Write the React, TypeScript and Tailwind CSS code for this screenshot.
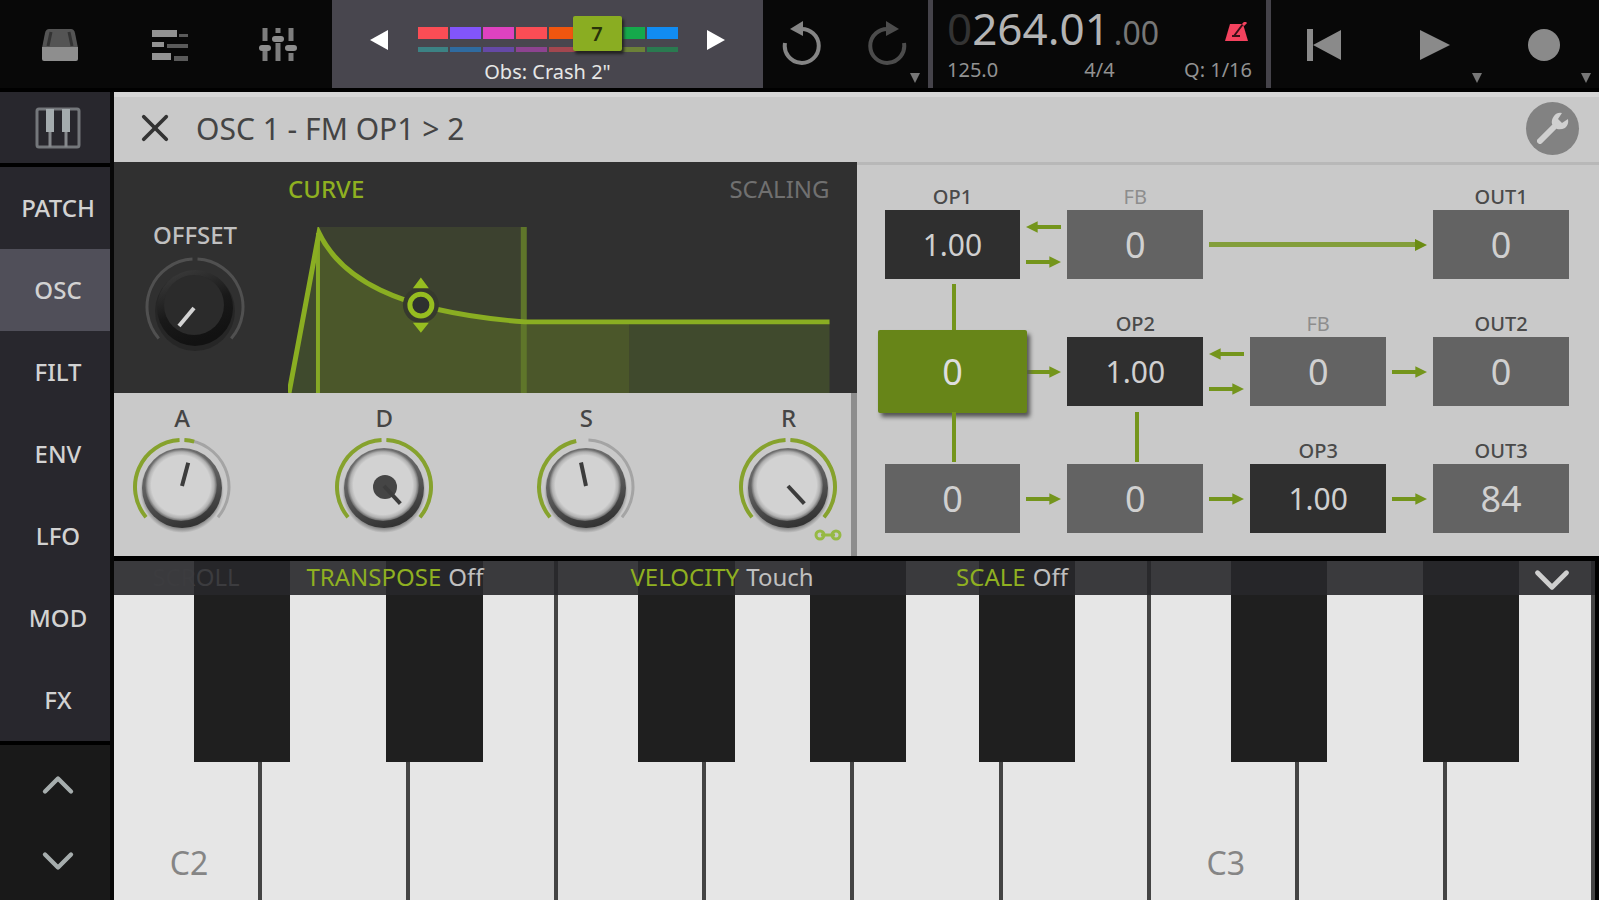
import { ChevronDown, ChevronUp, X } from "lucide-react";

const tabs = ["PATCH", "OSC", "FILT", "ENV", "LFO", "MOD", "FX"];

const clips = [
  { top: "bg-[#fb4d55]", bottom: "bg-[#3c8284]" },
  { top: "bg-[#8255fb]", bottom: "bg-[#2f6ba0]" },
  { top: "bg-[#df42c0]", bottom: "bg-[#6549a6]" },
  { top: "bg-[#fb4d55]", bottom: "bg-[#8d4390]" },
  { top: "bg-[#f0560f]", bottom: "bg-[#a3474f]" },
  { top: "bg-[#8aad22]", bottom: "bg-[#8d4428]" },
  { top: "bg-[#15a94b]", bottom: "bg-[#6c8138]" },
  { top: "bg-[#118cf2]", bottom: "bg-[#2a7a50]" },
];

const knobs = [
  { name: "A", angle: 15 },
  { name: "D", angle: 137, dot: true },
  { name: "S", angle: -12 },
  { name: "R", angle: 137, linked: true },
];

const keys = [
  { note: "C2", label: true, sharp: "left-[54%]" },
  { note: "D2", sharp: "left-[84%]" },
  { note: "E2" },
  { note: "F2", sharp: "left-[54%]" },
  { note: "G2", sharp: "left-[70%]" },
  { note: "A2", sharp: "left-[84%]" },
  { note: "B2" },
  { note: "C3", label: true, sharp: "left-[54%]" },
  { note: "D3", sharp: "left-[84%]" },
  { note: "E3" },
];

const settings = [
  { name: "TRANSPOSE", value: "Off" },
  { name: "VELOCITY", value: "Touch" },
  { name: "SCALE", value: "Off" },
];

function arc(from: number, to: number, r: number) {
  const point = (deg: number) => {
    const a = ((deg - 90) * Math.PI) / 180;
    return `${50 + r * Math.cos(a)} ${50 + r * Math.sin(a)}`;
  };
  return `M${point(from)}A${r} ${r} 0 0 1 ${point(to)}`;
}

function Caret() {
  return (
    <svg className="absolute right-2 bottom-[5px] h-[10px] w-[10px]" viewBox="0 0 12 12">
      <path d="M0 0h12L6 12z" fill="#777" />
    </svg>
  );
}

function TopBar() {
  return (
    <header className="grid h-[92px] shrink-0 grid-cols-[332fr_431fr_165fr_343fr_328fr] border-b-4 border-black bg-[#080808]">
      <div className="grid grid-cols-3 pt-[2px] pl-[6px]">
        <button aria-label="Devices" className="flex items-center justify-center">
          <svg className="h-9 w-10" viewBox="0 0 40 36">
            <path d="M9 2h22q3 0 4 4l3 15H2L5 6q1-4 4-4z" fill="#545454" />
            <path d="M11 5L8 19M29 5l3 14" stroke="#333" strokeWidth="3" />
            <path d="M2 20h36v12q0 2-2 2H4q-2 0-2-2z" fill="#8e8e8e" />
          </svg>
        </button>
        <button aria-label="Song" className="flex items-center justify-center">
          <svg className="h-9 w-10" viewBox="0 0 40 36">
            <path d="M3 3h25v7H3zM3 15h12v5H3zM3 26h19v7H3z" fill="#929292" />
            <path d="M30 7h9v3h-9zM18 17h21v4H18zM25 29h14v5H25z" fill="#5a5a5a" />
          </svg>
        </button>
        <button aria-label="Mixer" className="flex items-center justify-center">
          <svg className="h-9 w-10" viewBox="0 0 40 36" stroke="#7d7d7d" fill="none">
            <path d="M7 1v13M7 18v16M20 1v5M20 16v18M33 1v13M33 26v8" strokeWidth="5" />
            <path d="M4 21h6M17 12h6M30 21h6" stroke="#8e8e8e" strokeWidth="6" strokeLinecap="round" />
          </svg>
        </button>
      </div>

      <div className="flex justify-between bg-[#48464e] px-[38px]">
        <button aria-label="Previous track" className="pb-2">
          <svg className="h-5 w-[18px]" viewBox="0 0 18 20">
            <path d="M18 0v20L0 10z" fill="#fff" />
          </svg>
        </button>
        <div className="flex flex-col items-center pt-[27px]">
          <div className="relative grid w-[260px] grid-cols-8 gap-x-[2px] gap-y-2">
            {clips.map((c, i) => (
              <span key={i} className={`h-3 ${c.top}`} />
            ))}
            {clips.map((c, i) => (
              <span key={i} className={`h-[5px] ${c.bottom}`} />
            ))}
            <span className="absolute -top-[11px] left-[155px] flex h-[35px] w-[49px] items-center justify-center rounded-xs bg-[#8aad22] text-xl font-semibold text-[#28330a] shadow-[2px_3px_3px_#222]">
              7
            </span>
          </div>
          <span className="mt-1 text-xl leading-8 text-[#e6e6e6]">Obs: Crash 2"</span>
        </div>
        <button aria-label="Next track" className="pb-2">
          <svg className="h-5 w-[18px]" viewBox="0 0 18 20">
            <path d="M0 0v20l18-10z" fill="#fff" />
          </svg>
        </button>
      </div>

      <div className="grid grid-cols-2">
        <button aria-label="Undo" className="flex items-center justify-center pr-1 pb-1">
          <svg className="h-[46px] w-10" viewBox="0 0 40 46" fill="none">
            <path d="M3 24A17 17 0 1 0 18 10" stroke="#858585" strokeWidth="4" />
            <path d="M8 10L21 2v15z" fill="#858585" />
          </svg>
        </button>
        <button aria-label="Redo" className="relative flex items-center justify-center pb-1">
          <svg className="h-[46px] w-10" viewBox="0 0 40 46" fill="none">
            <path d="M37 24A17 17 0 1 1 22 10" stroke="#4c4c4c" strokeWidth="4" />
            <path d="M32 10L19 2v15z" fill="#4c4c4c" />
          </svg>
          <Caret />
        </button>
      </div>

      <div className="flex flex-col border-x-[5px] border-[#45434a] px-[14px] text-[#929292]">
        <div className="flex h-14 items-baseline">
          <span className="text-[44px] leading-[56px] text-[#333]">0</span>
          <span className="text-[44px] leading-[56px] text-[#b4b4b4]">264.01</span>
          <span className="ml-1 text-[32px] text-[#777]">.00</span>
          <button aria-label="Metronome" className="mt-[22px] mr-1 ml-auto self-start">
            <svg className="h-[19px] w-[23px]" viewBox="0 0 23 19">
              <path d="M5 2h13l5 17H0z" fill="#f4425e" />
              <path d="M9 14L18 2M7 14h8" stroke="#3a0f18" strokeWidth="2" />
              <path d="M18 3l3-3" stroke="#f4425e" strokeWidth="3" />
            </svg>
          </button>
        </div>
        <div className="grid grid-cols-3 text-xl leading-7">
          <span>125.0</span>
          <span className="text-center">4/4</span>
          <span className="text-right">Q: 1/16</span>
        </div>
      </div>

      <div className="grid grid-cols-3">
        <button aria-label="Rewind" className="flex items-center justify-center pt-[2px] pr-1">
          <svg className="h-8 w-[34px]" viewBox="0 0 34 32" fill="#8a8a8a">
            <path d="M0 0h6v32H0zM34 1v30L6 16z" />
          </svg>
        </button>
        <button aria-label="Play" className="relative flex items-center justify-center pt-[2px]">
          <svg className="h-8 w-8" viewBox="0 0 32 32">
            <path d="M1 1v30l30-15z" fill="#8a8a8a" />
          </svg>
          <Caret />
        </button>
        <button aria-label="Record" className="relative flex items-center justify-center pt-[2px]">
          <span className="h-8 w-8 rounded-full bg-[#8a8a8a]" />
          <Caret />
        </button>
      </div>
    </header>
  );
}

function Sidebar() {
  return (
    <nav className="flex w-[114px] shrink-0 flex-col border-r-4 border-[#080808] bg-[#28272d]">
      <button
        aria-label="Keyboard"
        className="flex h-[75px] items-center justify-center border-b-4 border-black pl-[6px]"
      >
        <svg className="h-[42px] w-[46px]" viewBox="0 0 46 42" fill="none">
          <rect x="2" y="2" width="42" height="38" rx="2" stroke="#74777b" strokeWidth="3" />
          <path d="M15 24v16M31 24v16" stroke="#85888c" strokeWidth="3" />
          <path d="M15 2v23M31 2v23" stroke="#a4abae" strokeWidth="8" />
        </svg>
      </button>
      {tabs.map((t) => (
        <button
          key={t}
          className={`h-[82px] pl-[6px] text-2xl font-medium text-[#d2d2d2] ${t === "OSC" ? "bg-[#504f59]" : ""}`}
        >
          {t}
        </button>
      ))}
      <div className="flex flex-1 flex-col items-center justify-center gap-6 border-t-4 border-black bg-[#191919] pl-[6px] text-[#a6adad]">
        <button aria-label="Octave up">
          <ChevronUp className="h-[52px] w-[58px]" strokeWidth={2} />
        </button>
        <button aria-label="Octave down">
          <ChevronDown className="h-[52px] w-[58px]" strokeWidth={2} />
        </button>
      </div>
    </nav>
  );
}

function OffsetKnob() {
  return (
    <label className="flex w-[162px] flex-col items-center pt-[57px] text-2xl leading-8 font-medium text-[#c0c0c0]">
      OFFSET
      <span className="relative mt-[6px]">
        <svg className="h-[100px] w-[100px]" viewBox="0 0 100 100" fill="none">
          <defs>
            <linearGradient id="dark-knob" x1="0" y1="0" x2="0.4" y2="1">
              <stop offset="0" stopColor="#404040" />
              <stop offset="0.6" stopColor="#191919" />
              <stop offset="1" stopColor="#121212" />
            </linearGradient>
          </defs>
          <path d={arc(-131, -3, 48) + arc(3, 131, 48)} stroke="#505050" strokeWidth="3" />
          <circle cx="50" cy="54" r="40" fill="#262626" />
          <circle cx="50" cy="51" r="38" fill="url(#dark-knob)" />
          <circle cx="49" cy="48" r="30" fill="#2b2b2b" />
          <path d="M49 51L34 69" stroke="#d4d4d4" strokeWidth="4" />
        </svg>
        <input type="range" min={-100} max={100} defaultValue={-100} className="absolute inset-0 w-full opacity-0" />
      </span>
    </label>
  );
}

function CurvePanel() {
  return (
    <div className="flex h-[231px] bg-[#303030] pr-[27px]">
      <OffsetKnob />
      <div className="flex flex-1 flex-col pl-3">
        <div className="flex h-[65px] items-center justify-between pb-3 text-2xl">
          <button className="font-medium text-[#8fb021]">CURVE</button>
          <button className="text-[#707070]">SCALING</button>
        </div>
        <svg className="h-[166px] w-full" viewBox="0 0 542 168" preserveAspectRatio="none" fill="none">
          <path d="M31 0H237V168H31z" fill="#3c412f" />
          <path d="M1 168L31 4V168z" fill="#3f4a2d" />
          <path d="M31 4C52 50 105 86 237 96H342V168H31z" fill="#4b572a" />
          <path d="M342 96H542V168H342z" fill="#404a2d" />
          <path d="M236 0V168" stroke="#5f762a" strokeWidth="6" />
          <path d="M30 6V168" stroke="#85a825" strokeWidth="4" />
          <path d="M1 168L31 6C52 50 105 86 237 96H542" stroke="#8aae22" strokeWidth="5" />
          <circle cx="133" cy="79" r="18" fill="#36392d" />
          <circle cx="133" cy="79" r="11" fill="#2e312f" stroke="#96bd20" strokeWidth="5" />
          <path d="M125 62h16l-8-11zM125 97h16l-8 10z" fill="#96bd20" />
        </svg>
      </div>
    </div>
  );
}

function Knob({ name, angle, dot, linked }: { name: string; angle: number; dot?: boolean; linked?: boolean }) {
  const end = Math.min(angle, 130);
  return (
    <label className="flex flex-col items-center pt-[9px] text-2xl leading-8 font-medium text-[#454545]">
      {name}
      <span className="relative mt-[3px]">
        <svg className="h-[100px] w-[100px]" viewBox="0 0 100 100" fill="none">
          <defs>
            <linearGradient id="rim" x1="0.2" y1="0" x2="0.5" y2="1">
              <stop offset="0" stopColor="#757575" />
              <stop offset="0.5" stopColor="#5c5c5c" />
              <stop offset="1" stopColor="#333" />
            </linearGradient>
            <radialGradient id="cap" cx="0.5" cy="0.5" r="0.5">
              <stop offset="0.82" stopColor="#d2d2d2" />
              <stop offset="0.92" stopColor="#b0b0b0" />
              <stop offset="1" stopColor="#666" />
            </radialGradient>
            <radialGradient id="shade" cx="0.5" cy="0.5" r="0.5">
              <stop offset="0.86" stopColor="#555" stopOpacity="0.7" />
              <stop offset="1" stopColor="#555" stopOpacity="0" />
            </radialGradient>
          </defs>
          <path d={arc(3, 130, 47)} stroke="#a4a4a4" strokeWidth="3" />
          <path d={arc(-130, Math.min(end, -3), 47)} stroke="#86a22d" strokeWidth="4" />
          {end > 3 && <path d={arc(3, end, 47)} stroke="#86a22d" strokeWidth="4" />}
          <circle cx="50" cy="54" r="42" fill="url(#shade)" />
          <circle cx="50" cy="51" r="40" fill="url(#rim)" />
          <circle cx="49" cy="48" r="36" fill="url(#cap)" />
          {dot && <circle cx="51" cy="50" r="12" fill="#454545" />}
          <path d="M50 49V25" stroke="#3c3c3c" strokeWidth="4" transform={`rotate(${angle} 50 49)`} />
        </svg>
        <input type="range" min={-135} max={137} defaultValue={angle} className="absolute inset-0 w-full opacity-0" />
        {linked && (
          <svg className="absolute -right-1 -bottom-1 h-3 w-7" viewBox="0 0 28 12" fill="none">
            <circle cx="6" cy="6" r="4" stroke="#96b944" strokeWidth="3" />
            <circle cx="22" cy="6" r="4" stroke="#96b944" strokeWidth="3" />
            <path d="M7 6h14" stroke="#96b944" strokeWidth="3" />
          </svg>
        )}
      </span>
    </label>
  );
}

function Arrow({ left }: { left?: boolean }) {
  return (
    <svg className="h-3 w-full" viewBox="0 0 36 12">
      {left ? (
        <path d="M36 4v4H12v4L0 6 12 0v4z" fill="#74951c" />
      ) : (
        <path d="M0 4v4h24v4l12-6-12-6v4z" fill="#74951c" />
      )}
    </svg>
  );
}

function Gap({ feedback }: { feedback?: boolean }) {
  return (
    <div className="mt-6 flex h-[69px] flex-col items-center justify-center gap-[23px] px-[6px]">
      {feedback && <Arrow left />}
      <Arrow />
    </div>
  );
}

type CellProps = { label?: string; value: string; kind?: "op" | "on"; line?: "short" | "long" };

function Cell({ label, value, kind, line }: CellProps) {
  const text = value === "1.00" ? "text-[30px]" : "text-4xl";
  return (
    <div className="relative">
      <div
        className={`h-6 text-center text-xl leading-[22px] ${label === "FB" ? "text-[#8d8d8d]" : "font-medium text-[#4a4a4a]"}`}
      >
        {label}
      </div>
      {kind === "on" ? (
        <div className="relative h-[69px]">
          <button className="absolute -inset-[7px] rounded-xs bg-[#678518] text-4xl text-[#dedede] shadow-[3px_4px_4px_#555]">
            {value}
          </button>
        </div>
      ) : (
        <button className={`h-[69px] w-full text-[#d0d0d0] ${text} ${kind === "op" ? "bg-[#2f2f2f]" : "bg-[#636363]"}`}>
          {value}
        </button>
      )}
      {line === "short" && <span className="absolute top-[98px] left-1/2 h-[46px] w-1 bg-[#74951c]" />}
      {line === "long" && <span className="absolute top-[99px] left-1/2 h-[50px] w-1 bg-[#74951c]" />}
    </div>
  );
}

function Matrix() {
  return (
    <section className="flex-1 border-t-[3px] border-[#b8b8b8] pt-[21px] pr-[30px] pl-7">
      <div className="grid grid-cols-[1fr_47px_1fr_47px_1fr_47px_1fr] gap-y-[34px]">
        <Cell label="OP1" value="1.00" kind="op" line="short" />
        <Gap feedback />
        <Cell label="FB" value="0" />
        <div className="col-span-3 mt-6 flex h-[69px] items-center px-[6px]">
          <span className="h-[5px] flex-1 bg-[#839e3a]" />
          <svg className="h-3 w-3" viewBox="0 0 12 12">
            <path d="M0 0l12 6-12 6z" fill="#6b8c12" />
          </svg>
        </div>
        <Cell label="OUT1" value="0" />

        <Cell value="0" kind="on" line="long" />
        <Gap />
        <Cell label="OP2" value="1.00" kind="op" line="long" />
        <Gap feedback />
        <Cell label="FB" value="0" />
        <Gap />
        <Cell label="OUT2" value="0" />

        <Cell value="0" />
        <Gap />
        <Cell value="0" />
        <Gap />
        <Cell label="OP3" value="1.00" kind="op" />
        <Gap />
        <Cell label="OUT3" value="84" />
      </div>
    </section>
  );
}

function Keyboard() {
  return (
    <section className="relative flex min-h-[300px] flex-1 border-t-[5px] border-black bg-black pr-1">
      {keys.map((k) => (
        <div key={k.note} className="relative flex flex-1">
          <button
            aria-label={k.note}
            className="flex flex-1 items-end justify-center border-r-4 border-[#444] bg-[#e6e6e6] pb-4 pl-[6px] text-[32px] leading-[42px] text-[#858585]"
          >
            {k.label && k.note}
          </button>
          {k.sharp && (
            <button
              aria-label={`${k.note} sharp`}
              className={`absolute top-0 z-10 h-[201px] w-[65%] bg-[#1f1f1f] ${k.sharp}`}
            />
          )}
        </div>
      ))}
      <div className="absolute inset-x-0 top-0 z-20 mr-1 grid h-[34px] grid-cols-[164fr_234fr_420fr_160fr_503fr] grid-rows-[34px] bg-[#27272a]/90 pb-1 text-center text-2xl leading-8 whitespace-nowrap">
        <button className="pb-1 text-[#3c3c3f]">SCROLL</button>
        {settings.map((s) => (
          <button key={s.name} className="flex justify-center gap-[7px] text-[#c0c0c0]">
            <span className="text-[#8fb021]">{s.name}</span>
            {s.value}
          </button>
        ))}
        <button aria-label="Hide keyboard" className="flex items-center justify-end pt-1 pr-[14px] text-[#cfcfcf]">
          <ChevronDown className="h-[58px] w-[58px]" strokeWidth={2} />
        </button>
      </div>
    </section>
  );
}

export default function App() {
  return (
    <div className="flex min-h-screen flex-col bg-black font-['Noto_Sans',sans-serif]">
      <TopBar />
      <div className="flex flex-1">
        <Sidebar />
        <main className="flex flex-1 flex-col bg-[#c9c9c9]">
          <div className="flex h-[70px] items-center border-t-[5px] border-[#d6d6d6] pr-5 pb-[3px] pl-[26px]">
            <button aria-label="Close" className="text-[#333]">
              <X className="h-[30px] w-[30px] scale-150" strokeWidth={2} />
            </button>
            <h1 className="ml-[26px] text-[30px] text-[#444]">OSC 1 - FM OP1 &gt; 2</h1>
            <button
              aria-label="Settings"
              className="ml-auto flex h-[53px] w-[53px] items-center justify-center rounded-full bg-[#828282]"
            >
              <svg className="h-8 w-8" viewBox="0 0 32 32" fill="none">
                <path d="M3 29L19 13" stroke="#d0d0d0" strokeWidth="6" strokeLinecap="round" />
                <path d="M25 1l-4 6 4 4 6-4q1 6-3 9-4 2-8 1l-5-5q-1-4 2-8 3-4 8-3z" fill="#d0d0d0" />
              </svg>
            </button>
          </div>
          <div className="flex">
            <section className="w-1/2">
              <CurvePanel />
              <div className="flex h-[163px] justify-between border-r-[6px] border-[#8d8d8d] pr-3 pl-[18px]">
                {knobs.map((k) => (
                  <Knob key={k.name} {...k} />
                ))}
              </div>
            </section>
            <Matrix />
          </div>
          <Keyboard />
        </main>
      </div>
    </div>
  );
}
